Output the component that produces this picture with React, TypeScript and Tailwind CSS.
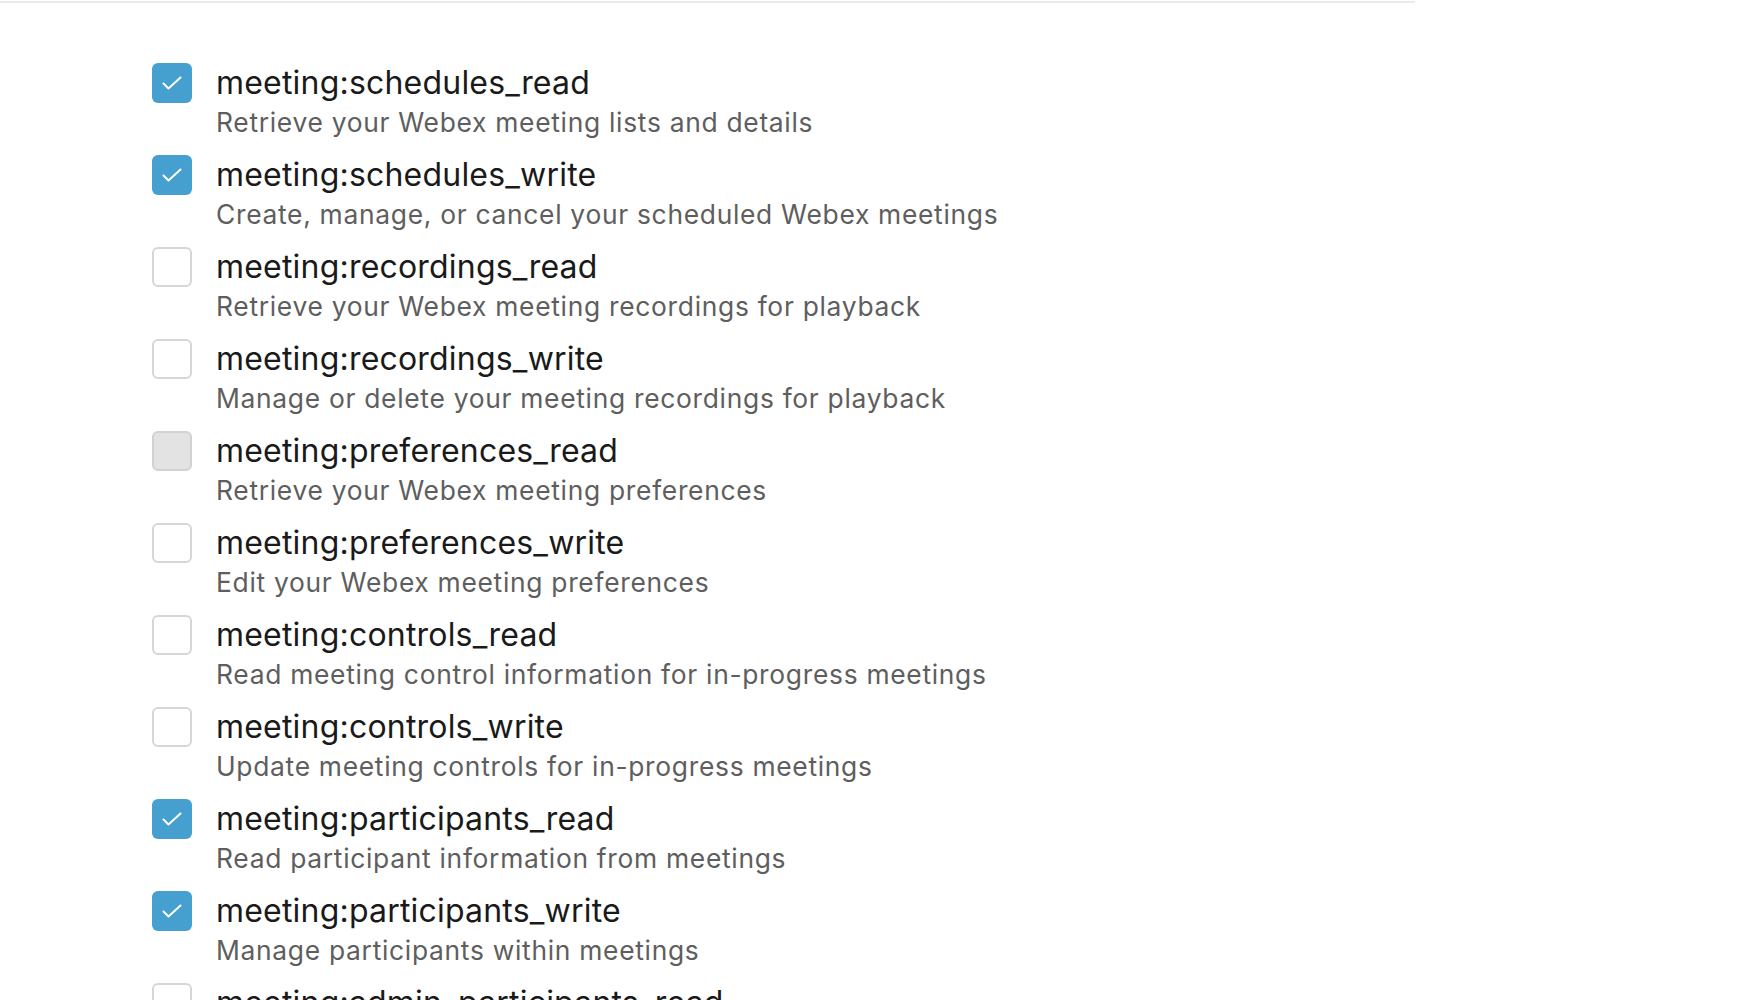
import React from 'react';

type Scope = {
  name: string;
  description: string;
  state: 'checked' | 'unchecked' | 'disabled';
};

const scopes: Scope[] = [
  { name: 'meeting:schedules_read', description: 'Retrieve your Webex meeting lists and details', state: 'checked' },
  { name: 'meeting:schedules_write', description: 'Create, manage, or cancel your scheduled Webex meetings', state: 'checked' },
  { name: 'meeting:recordings_read', description: 'Retrieve your Webex meeting recordings for playback', state: 'unchecked' },
  { name: 'meeting:recordings_write', description: 'Manage or delete your meeting recordings for playback', state: 'unchecked' },
  { name: 'meeting:preferences_read', description: 'Retrieve your Webex meeting preferences', state: 'disabled' },
  { name: 'meeting:preferences_write', description: 'Edit your Webex meeting preferences', state: 'unchecked' },
  { name: 'meeting:controls_read', description: 'Read meeting control information for in-progress meetings', state: 'unchecked' },
  { name: 'meeting:controls_write', description: 'Update meeting controls for in-progress meetings', state: 'unchecked' },
  { name: 'meeting:participants_read', description: 'Read participant information from meetings', state: 'checked' },
  { name: 'meeting:participants_write', description: 'Manage participants within meetings', state: 'checked' },
  { name: 'meeting:admin_participants_read', description: 'Read participant information from meetings as an administrator', state: 'unchecked' },
];

function Checkbox({ state }: { state: Scope['state'] }) {
  if (state === 'checked') {
    return (
      <span className="flex h-10 w-10 shrink-0 items-center justify-center rounded-[6px] bg-[#45a0d0]">
        <svg width="22" height="16" viewBox="0 0 22 16" fill="none">
          <path d="M2.5 8.5l5 5L19.5 2.5" stroke="white" strokeWidth="2" strokeLinecap="round" strokeLinejoin="round" />
        </svg>
      </span>
    );
  }
  if (state === 'disabled') {
    return <span className="block h-10 w-10 shrink-0 rounded-[6px] border-2 border-[#d2d2d2] bg-[#e3e3e3]" />;
  }
  return <span className="block h-10 w-10 shrink-0 rounded-[6px] border-2 border-[#d6d6d6] bg-white" />;
}

export default function App() {
  return (
    <div className="h-[1000px] overflow-hidden bg-white font-['Inter',sans-serif]">
      <div className="mt-px h-[2px] w-[1415px] bg-[#ebebeb]" />

      <ul className="flex flex-col gap-[17px] pl-[152px] pt-[60px]">
        {scopes.map((s) => (
          <li key={s.name} className="flex items-start gap-[24px]">
            <Checkbox state={s.state} />
            <div className="flex flex-col">
              <span className="text-[32px] leading-[40px] tracking-[0.2px] text-[#1a1a1a]">{s.name}</span>
              <span className="mt-[3px] text-[26.4px] leading-[32px] tracking-[0.7px] text-[#5e5e5e]">{s.description}</span>
            </div>
          </li>
        ))}
      </ul>
    </div>
  );
}
